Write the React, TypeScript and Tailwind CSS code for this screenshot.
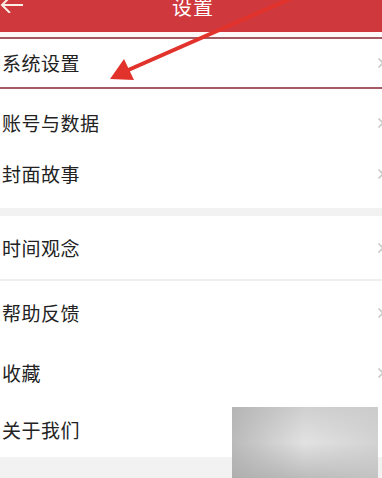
import React from "react";

const Chevron = () => (
  <svg width="8" height="12" viewBox="0 0 8 12" className="mr-[-3px] shrink-0">
    <path d="M1.5 1.5 L6 6 L1.5 10.5" fill="none" stroke="#c9c9c9" strokeWidth="1.6" />
  </svg>
);

export default function App() {
  const text = "text-[19px] leading-[20px] text-[#222222] tracking-[0.5px]";
  return (
    <div className="relative w-[382px] h-[478px] overflow-hidden bg-white font-['Noto_Sans_CJK_SC','Noto_Sans',sans-serif]">
      {/* header */}
      <div className="relative h-[32px] bg-[#cf383d] flex justify-center">
        <svg width="26" height="16" viewBox="0 0 26 16" className="absolute left-0 top-[-3px]">
          <path d="M23 8 H2 M10 0 L2 8 L10 16" fill="none" stroke="#fbeee6" strokeWidth="2" />
        </svg>
        <span className="text-white text-[20px] leading-none mt-[-3px] ml-[4px] tracking-[1px]">设置</span>
      </div>
      <div className="h-[5px] bg-[#fff8f8]" />
      {/* highlighted row */}
      <div className="h-[52px] border-y-2 border-[#a45a62] flex items-center justify-between pl-[2px]">
        <span className={text}>系统设置</span>
        <Chevron />
      </div>
      <div className="h-[68px] flex items-center justify-between pl-[2px]">
        <span className={text}>账号与数据</span>
        <Chevron />
      </div>
      <div className="h-[51px] flex items-center justify-between pl-[2px] pb-[18px]">
        <span className={text}>封面故事</span>
        <Chevron />
      </div>
      <div className="h-[8px] bg-[#f2f2f2]" />
      <div className="h-[63px] flex items-center justify-between pl-[2px]">
        <span className={text}>时间观念</span>
        <Chevron />
      </div>
      <div className="h-[2px] bg-[#efefef]" />
      <div className="h-[64px] flex items-center justify-between pl-[2px]">
        <span className={text}>帮助反馈</span>
        <Chevron />
      </div>
      <div className="h-[55px] flex items-center justify-between pl-[2px]">
        <span className={text}>收藏</span>
        <Chevron />
      </div>
      <div className="h-[57px] flex items-center justify-between pl-[2px] pt-[3px]">
        <span className={text}>关于我们</span>
      </div>
      <div className="h-[30px] bg-[#f2f2f2]" />

      {/* blurred box */}
      <div className="absolute left-[232px] top-[407px] w-[146px] h-[71px] bg-gradient-to-b from-[#d0d0d0] via-[#e2e2e2] to-[#bcbcbc]">
        <div className="w-full h-full bg-gradient-to-r from-[#a9a9a9]/70 via-transparent to-[#c8c8c8]/60" />
      </div>

      {/* red annotation arrow */}
      <svg width="382" height="478" className="absolute left-0 top-0 pointer-events-none">
        <line x1="292" y1="-2" x2="126" y2="71" stroke="#e2322c" strokeWidth="4" strokeLinecap="round" />
        <polygon points="110,79 124,59 134,80" fill="#e2322c" />
      </svg>
    </div>
  );
}
